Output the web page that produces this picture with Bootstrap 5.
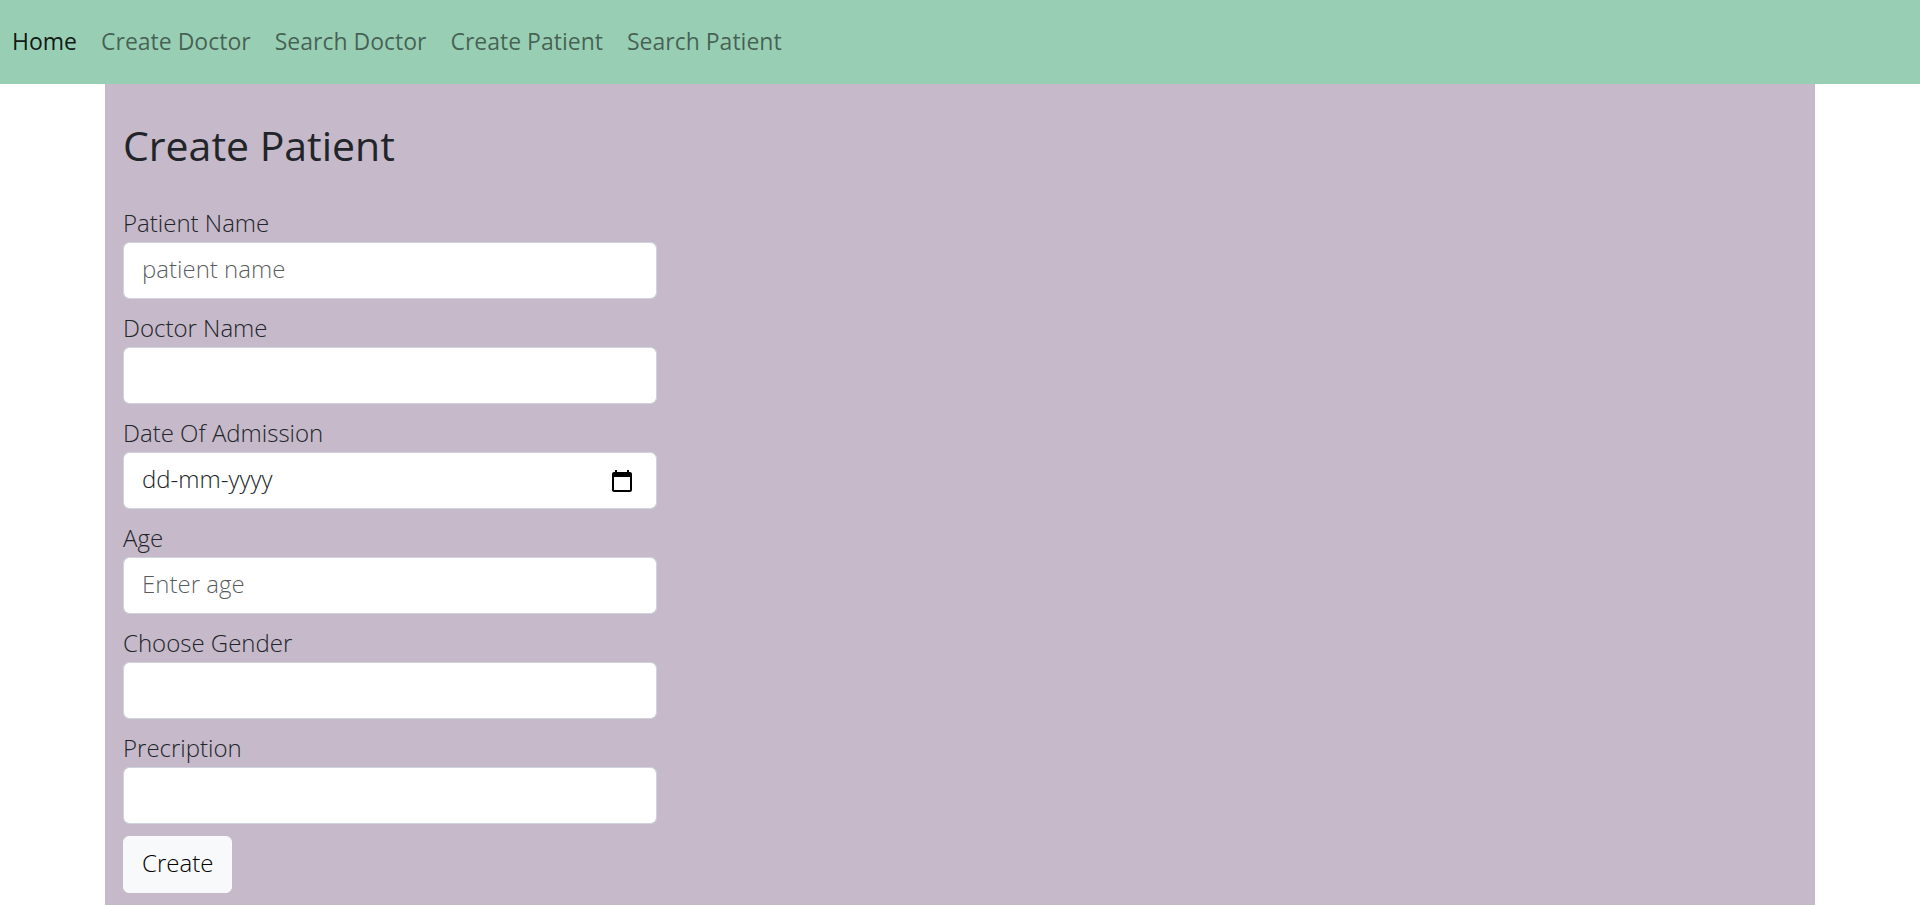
<!DOCTYPE html>
<html lang="en">
<head>
<meta charset="utf-8">
<meta name="viewport" content="width=device-width, initial-scale=1">
<title>Create Patient</title>
<link href="https://cdn.jsdelivr.net/npm/bootstrap@5.3.0/dist/css/bootstrap.min.css" rel="stylesheet">
<style>
  html { font-size: 24px; }
  body { font-family: "Open Sans", "Noto Sans", sans-serif; font-size: 24px; line-height: 36px; font-weight: 300; }
  .site-nav { background: #98cfb4; font-weight: 400; }
  .site-nav .nav-link { font-size: 23px; line-height: 34px; padding-bottom: 14px; color: rgba(0, 0, 0, .55); }
  .site-nav .nav-link.active { color: rgba(0, 0, 0, .9); }
  .patient-panel { max-width: 1710px; background: #c6b9ca; }
  .panel-title { font-size: 41px; line-height: 50px; font-weight: 400; }
  .field-label { display: block; line-height: 34px; padding-bottom: 2px; }
  .form-control, .btn-create { height: 57px; padding: 8px 18px 12px; font-size: 24px; line-height: 34px; font-weight: 300; border-radius: 6px; }
  .form-control { border-color: #ced4da; }
  .date-field::placeholder { color: #212529; }
  .date-icon { right: 23px; pointer-events: none; }
  .btn-create { color: #000; }
</style>
</head>
<body>
<nav class="navbar navbar-expand site-nav" aria-label="Main">
  <div class="navbar-nav">
    <a class="nav-link active" aria-current="page" href="#">Home</a>
    <a class="nav-link" href="#">Create Doctor</a>
    <a class="nav-link" href="#">Search Doctor</a>
    <a class="nav-link" href="#">Create Patient</a>
    <a class="nav-link" href="#">Search Patient</a>
  </div>
</nav>
<main class="container patient-panel pb-2">
  <h1 class="panel-title pt-4 pb-4 mb-0">Create Patient</h1>
  <form>
    <div class="row">
      <div class="col-4">
        <div class="mb-2">
          <label class="field-label" for="patientName">Patient Name</label>
          <input class="form-control" type="text" id="patientName" placeholder="patient name">
        </div>
        <div class="mb-2">
          <label class="field-label" for="doctorName">Doctor Name</label>
          <select class="form-control" id="doctorName"></select>
        </div>
        <div class="mb-2">
          <label class="field-label" for="admissionDate">Date Of Admission</label>
          <div class="position-relative d-flex align-items-center">
            <input class="form-control date-field" type="text" id="admissionDate" placeholder="dd-mm-yyyy">
            <svg class="date-icon position-absolute" width="24" height="24" viewBox="0 0 24 24" aria-hidden="true"><path d="M20 3h-1V1h-2v2H7V1H5v2H4c-1.100 0-2 .900-2 2v16c0 1.100.900 2 2 2h16c1.100 0 2-.900 2-2V5c0-1.100-.900-2-2-2zm0 18H4V8h16v13z"/></svg>
          </div>
        </div>
        <div class="mb-2">
          <label class="field-label" for="age">Age</label>
          <input class="form-control" type="text" inputmode="numeric" id="age" placeholder="Enter age">
        </div>
        <div class="mb-2">
          <label class="field-label" for="gender">Choose Gender</label>
          <select class="form-control" id="gender"></select>
        </div>
        <div class="mb-2">
          <label class="field-label" for="prescription">Precription</label>
          <input class="form-control" type="text" id="prescription">
        </div>
        <button class="btn btn-light btn-create" type="submit">Create</button>
      </div>
    </div>
  </form>
</main>
<script src="https://cdn.jsdelivr.net/npm/bootstrap@5.3.0/dist/js/bootstrap.bundle.min.js"></script>
</body>
</html>
